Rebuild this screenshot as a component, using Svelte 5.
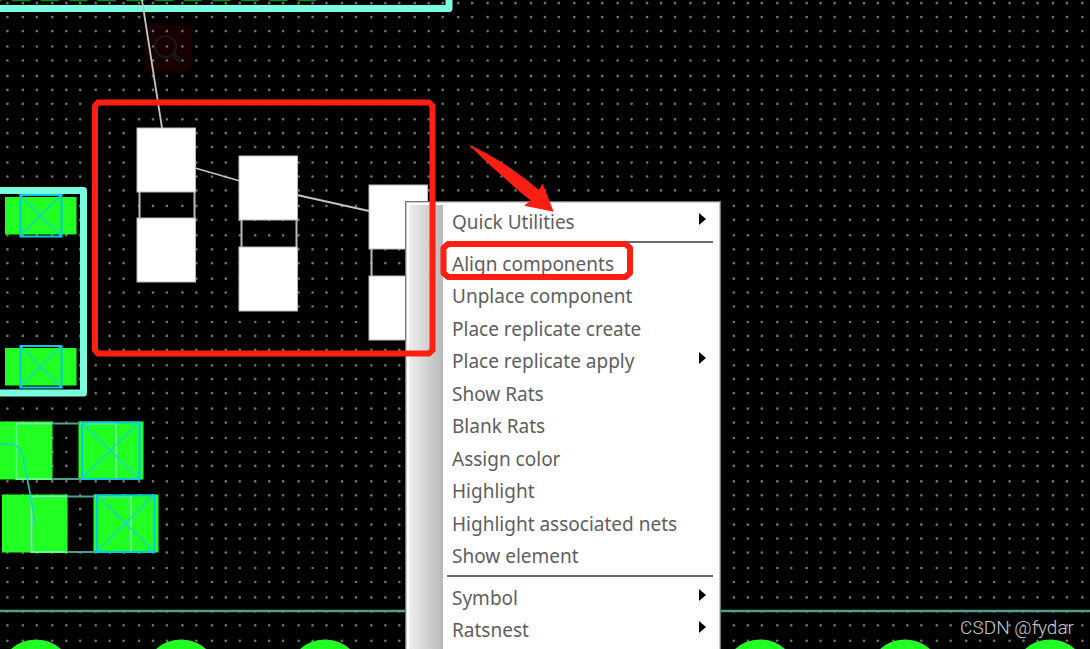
<script lang="ts">
  type Item = { label: string; submenu?: boolean };

  const groups: Item[][] = [
    [{ label: 'Quick Utilities', submenu: true }],
    [
      { label: 'Align components' },
      { label: 'Unplace component' },
      { label: 'Place replicate create' },
      { label: 'Place replicate apply', submenu: true },
      { label: 'Show Rats' },
      { label: 'Blank Rats' },
      { label: 'Assign color' },
      { label: 'Highlight' },
      { label: 'Highlight associated nets' },
      { label: 'Show element' }
    ],
    [
      { label: 'Symbol', submenu: true },
      { label: 'Ratsnest', submenu: true }
    ]
  ];

  // Grid dots snap to whole board units before the view scale is applied.
  const gridX = (i: number) => 7.4 + 1.549 * Math.floor(i * 9.3665 + 0.91);
  const gridY = (j: number) => 3.2 + 1.5475 * Math.floor(j * 9.36 + 0.25);
  let dots = '';
  for (let j = 0; j < 90; j++) {
    for (let i = 0; i < 140; i++) {
      dots += `M${gridX(i).toFixed(1)} ${gridY(j).toFixed(1)}h.01`;
    }
  }

  const parts = [
    { x: 137, y: 128, lower: 90 },
    { x: 239, y: 156, lower: 91 },
    { x: 369, y: 185, lower: 91 }
  ];
  const vias = [36, 181, 325, 470, 615, 760, 905, 1050];
  const crossed = [
    { x: 20, y: 195 },
    { x: 20, y: 346 }
  ];
  const chips = [
    { x: -12, y: 421.5 },
    { x: 3, y: 494.5 }
  ];
  const dashes = Array.from({ length: 12 }, (_, i) => -16.5 + i * 28.6);
</script>

<main class="board">
  <svg class="layer" aria-hidden="true">
    <rect class="badge" x="145" y="25" width="46.500" height="46.500" rx="6" />
    <path class="dots" d={dots} />

    {#each dashes as x}
      <path class="dash" d="M{x} 0h18" />
    {/each}
    <path class="outline" d="M0 8.500H449V0" />
    <path class="outline" d="M0 190.500H83.500V393H0" />
    <path class="edge" d="M0 611H2400" />

    {#each crossed as c}
      <rect class="copper" x="5" y={c.y + 2} width="71.500" height="37.500" />
      <rect class="blue" x={c.x + 0.5} y={c.y} width="41" height="41.500" />
      <path class="thin" d="M{c.x} {c.y}l41 41m0 -41l-41 41" />
    {/each}

    {#each chips as c}
      <rect class="copper" x={c.x - 1} y={c.y} width="65.500" height="58" />
      <rect class="copper" x={c.x + 90.5} y={c.y} width="65" height="58" />
      <rect class="body" x={c.x + 28.5} y={c.y + 2} width="99.500" height="55.500" />
      <path class="glow" d="M{c.x + 64} {c.y + 2}H{c.x + 28.5}v55.500H{c.x + 64}M{c.x + 92} {c.y + 2}h36v55.500" />
      <rect class="blue" x={c.x + 94} y={c.y + 1} width="57.500" height="56.500" />
      <path class="thin" d="M{c.x + 94} {c.y + 1}l57 56m0 -56l-57 56" />
    {/each}
    <path class="thin" d="M0 444H12Q20 445 23 457L30 493L35 524" />

    {#each vias as x}
      <circle class="copper" cx={x} cy="677" r="37.500" />
    {/each}

    <path class="rat" d="M142 0L162 128M195 168L240 181M297 195L369 211" />
    {#each parts as p}
      <rect class="pad" x={p.x} y={p.y} width="58.500" height="64" />
      <rect class="pad" x={p.x} y={p.y + p.lower} width="58.500" height="64" />
      <path class="side" d="M{p.x + 2.5} {p.y + 64}v27M{p.x + 57.5} {p.y + 64}v27" />
    {/each}

    <g class="lens">
      <circle cx="165.500" cy="46.500" r="10.500" />
      <path d="M172.500 54.500l5.500 6.500q3 .5 2.500-2l-6.500-6" />
    </g>
  </svg>

  <div class="menu" role="menu">
    <div class="gutter"></div>
    <div class="entries">
      {#each groups as group}
        <div class="group" role="group" style="--rows: {group.length}">
          {#each group as item}
            <button type="button" role="menuitem">
              <span>{item.label}</span>
              {#if item.submenu}
                <svg class="arrow" viewBox="0 0 7 12" aria-hidden="true"><path d="M0 0L7 6L0 12Z" /></svg>
              {/if}
            </button>
          {/each}
        </div>
        <hr />
      {/each}
    </div>
  </div>

  <svg class="layer marks" aria-hidden="true">
    <path d="M98 102.500H429L432.500 106V350L429 353.500H98L95 350V106Z" />
    <path d="M448 244H625.500L630 248V273L625.500 277H448L443.500 273V248Z" />
    <path class="pointer" d="M468.500 144.500Q505 161 539 190L542.500 183.500L553.700 211.700L524 205.700L530.700 200.300Q523 195 509 182Q488 164 468.500 144.500Z" />
  </svg>

  <p class="credit">CSDN @fydar</p>
</main>

<style>
  :global(body) {
    margin: 0;
    background: #000;
  }
  .board {
    position: relative;
    height: 100vh;
    overflow: hidden;
    background: #000;
    font-family: 'Noto Sans', 'Open Sans', sans-serif;
  }
  .layer {
    position: absolute;
    inset: 0;
    width: 100%;
    height: 100%;
    fill: none;
  }
  .dots {
    stroke: #707070;
    stroke-width: 2.7;
    stroke-linecap: round;
  }
  .dash {
    stroke: #0c8c0c;
    stroke-width: 2.4;
  }
  .outline {
    stroke: #78ffe0;
    stroke-width: 7;
    stroke-linejoin: round;
  }
  .edge {
    stroke: #4ba18e;
    stroke-width: 2.4;
  }
  .copper {
    fill: #22ff22;
  }
  .blue {
    stroke: #08c8e8;
    stroke-width: 2;
  }
  .thin {
    stroke: #10d8c8;
    stroke-width: 1.5;
  }
  .body {
    stroke: #4ba18e;
    stroke-width: 2;
  }
  .glow {
    stroke: #60ff90;
    stroke-width: 2;
  }
  .rat {
    stroke: #c4c4c4;
    stroke-width: 1.8;
  }
  .pad {
    fill: #fff;
    stroke: #bbb;
    stroke-width: 1;
  }
  .side {
    stroke: #bbb;
    stroke-width: 2;
  }
  .badge {
    fill: #180000;
  }
  .lens {
    stroke: #141a1a;
    stroke-width: 2.2;
  }
  .menu {
    position: absolute;
    top: 201px;
    left: 405px;
    display: flex;
    box-sizing: border-box;
    width: 316px;
    padding: 3px;
    border: 1px solid #777;
    background: #fff;
    box-shadow: inset 0 0 0 1px #ccc;
  }
  .gutter {
    flex: 0 0 34px;
    background: linear-gradient(90deg, #eee, #d4d4d4 50%, #b8b8b8);
  }
  .entries {
    flex: 1;
    padding: 1px 4px 0;
  }
  .group {
    display: grid;
    grid-auto-rows: 1fr;
    height: calc(var(--rows) * 65px / 2);
  }
  button {
    display: flex;
    align-items: center;
    justify-content: space-between;
    padding: 0 7px 0 5px;
    border: 0;
    background: none;
    color: #5e5e5e;
    font: 19px/24px 'Noto Sans', 'Open Sans', sans-serif;
    text-align: left;
    white-space: nowrap;
  }
  .arrow {
    width: 7px;
    height: 12px;
    margin-bottom: 6px;
    fill: #000;
  }
  hr {
    height: 2px;
    margin: 2px 0 5px;
    border: 0;
    background: #6a6a6a;
  }
  hr:last-child {
    background: #aaa;
  }
  .marks {
    pointer-events: none;
    stroke: #ff1e12;
    stroke-width: 6;
    stroke-linejoin: round;
  }
  .pointer {
    fill: #ff1e12;
    stroke: none;
  }
  .credit {
    position: absolute;
    right: 16px;
    bottom: 9px;
    margin: 0;
    color: #c8c8c8;
    font: 300 19px/24px Roboto, sans-serif;
  }
</style>
